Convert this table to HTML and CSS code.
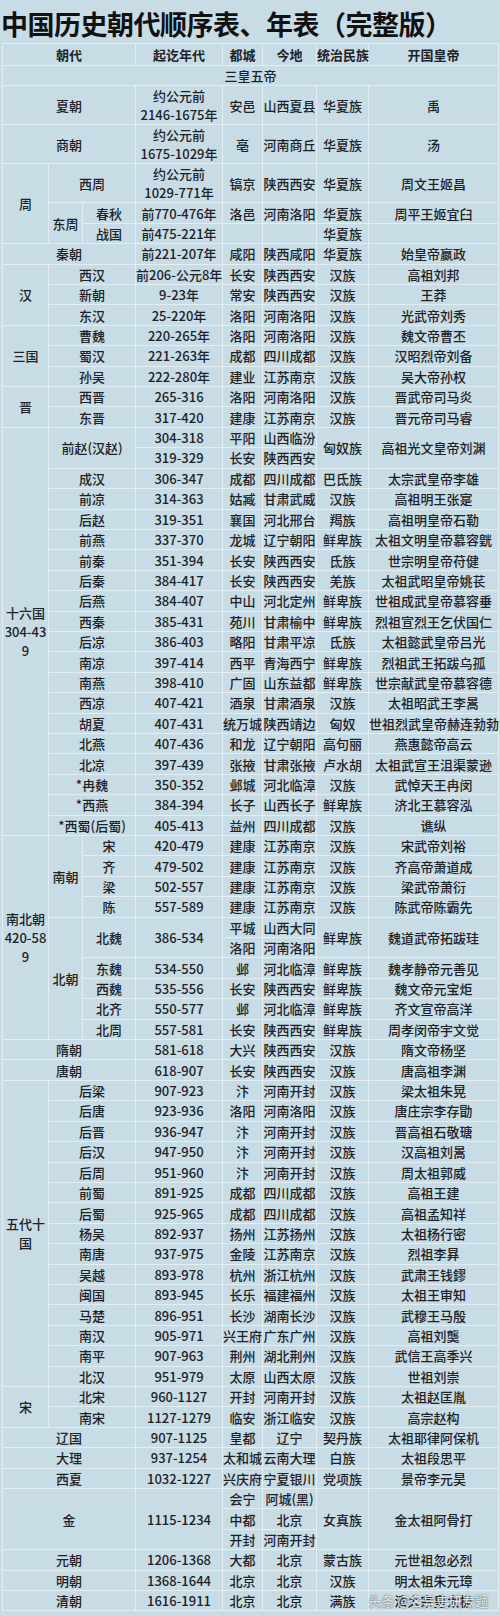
FILE: index.html
```html
<!DOCTYPE html>
<html lang="zh-CN">
<head>
<meta charset="utf-8">
<title>中国历史朝代顺序表、年表（完整版）</title>
<link rel="stylesheet" href="styles.css">
</head>
<body>
<div class="page">
  <h1 class="title">中国历史朝代顺序表、年表（完整版）</h1>
  <table class="dyn">
    <colgroup>
      <col class="c-a"><col class="c-b"><col class="c-c"><col class="c-d"><col class="c-e"><col class="c-f"><col class="c-g"><col class="c-h">
    </colgroup>
    <thead>
      <tr class="head"><th colspan="3">朝代</th><th>起讫年代</th><th>都城</th><th>今地</th><th>统治民族</th><th>开国皇帝</th></tr>
    </thead>
    <tbody>
      <tr><td colspan="8">三皇五帝</td></tr>
      <tr class="dbl"><td colspan="3">夏朝</td><td>约公元前<br>2146-1675年</td><td>安邑</td><td>山西夏县</td><td>华夏族</td><td>禹</td></tr>
      <tr class="dbl"><td colspan="3">商朝</td><td>约公元前<br>1675-1029年</td><td>亳</td><td>河南商丘</td><td>华夏族</td><td>汤</td></tr>
      <tr class="dbl"><td rowspan="3">周</td><td colspan="2">西周</td><td>约公元前<br>1029-771年</td><td>镐京</td><td>陕西西安</td><td>华夏族</td><td>周文王姬昌</td></tr>
      <tr><td rowspan="2">东周</td><td>春秋</td><td>前770-476年</td><td>洛邑</td><td>河南洛阳</td><td>华夏族</td><td>周平王姬宜臼</td></tr>
      <tr><td>战国</td><td>前475-221年</td><td></td><td></td><td>华夏族</td><td></td></tr>
      <tr><td colspan="3">秦朝</td><td>前221-207年</td><td>咸阳</td><td>陕西咸阳</td><td>华夏族</td><td>始皇帝嬴政</td></tr>
      <tr><td rowspan="3">汉</td><td colspan="2">西汉</td><td>前206-公元8年</td><td>长安</td><td>陕西西安</td><td>汉族</td><td>高祖刘邦</td></tr>
      <tr><td colspan="2">新朝</td><td>9-23年</td><td>常安</td><td>陕西西安</td><td>汉族</td><td>王莽</td></tr>
      <tr><td colspan="2">东汉</td><td>25-220年</td><td>洛阳</td><td>河南洛阳</td><td>汉族</td><td>光武帝刘秀</td></tr>
      <tr><td rowspan="3">三国</td><td colspan="2">曹魏</td><td>220-265年</td><td>洛阳</td><td>河南洛阳</td><td>汉族</td><td>魏文帝曹丕</td></tr>
      <tr><td colspan="2">蜀汉</td><td>221-263年</td><td>成都</td><td>四川成都</td><td>汉族</td><td>汉昭烈帝刘备</td></tr>
      <tr><td colspan="2">孙吴</td><td>222-280年</td><td>建业</td><td>江苏南京</td><td>汉族</td><td>吴大帝孙权</td></tr>
      <tr><td rowspan="2">晋</td><td colspan="2">西晋</td><td>265-316</td><td>洛阳</td><td>河南洛阳</td><td>汉族</td><td>晋武帝司马炎</td></tr>
      <tr><td colspan="2">东晋</td><td>317-420</td><td>建康</td><td>江苏南京</td><td>汉族</td><td>晋元帝司马睿</td></tr>
      <tr><td rowspan="20">十六国<br>304-43<br>9</td><td colspan="2" rowspan="2">前赵(汉赵)</td><td>304-318</td><td>平阳</td><td>山西临汾</td><td rowspan="2">匈奴族</td><td rowspan="2">高祖光文皇帝刘渊</td></tr>
      <tr><td>319-329</td><td>长安</td><td>陕西西安</td></tr>
      <tr><td colspan="2">成汉</td><td>306-347</td><td>成都</td><td>四川成都</td><td>巴氐族</td><td>太宗武皇帝李雄</td></tr>
      <tr><td colspan="2">前凉</td><td>314-363</td><td>姑臧</td><td>甘肃武威</td><td>汉族</td><td>高祖明王张寔</td></tr>
      <tr><td colspan="2">后赵</td><td>319-351</td><td>襄国</td><td>河北邢台</td><td>羯族</td><td>高祖明皇帝石勒</td></tr>
      <tr><td colspan="2">前燕</td><td>337-370</td><td>龙城</td><td>辽宁朝阳</td><td>鲜卑族</td><td>太祖文明皇帝慕容皝</td></tr>
      <tr><td colspan="2">前秦</td><td>351-394</td><td>长安</td><td>陕西西安</td><td>氐族</td><td>世宗明皇帝苻健</td></tr>
      <tr><td colspan="2">后秦</td><td>384-417</td><td>长安</td><td>陕西西安</td><td>羌族</td><td>太祖武昭皇帝姚苌</td></tr>
      <tr><td colspan="2">后燕</td><td>384-407</td><td>中山</td><td>河北定州</td><td>鲜卑族</td><td>世祖成武皇帝慕容垂</td></tr>
      <tr><td colspan="2">西秦</td><td>385-431</td><td>苑川</td><td>甘肃榆中</td><td>鲜卑族</td><td>烈祖宣烈王乞伏国仁</td></tr>
      <tr><td colspan="2">后凉</td><td>386-403</td><td>略阳</td><td>甘肃平凉</td><td>氐族</td><td>太祖懿武皇帝吕光</td></tr>
      <tr><td colspan="2">南凉</td><td>397-414</td><td>西平</td><td>青海西宁</td><td>鲜卑族</td><td>烈祖武王拓跋乌孤</td></tr>
      <tr><td colspan="2">南燕</td><td>398-410</td><td>广固</td><td>山东益都</td><td>鲜卑族</td><td>世宗献武皇帝慕容德</td></tr>
      <tr><td colspan="2">西凉</td><td>407-421</td><td>酒泉</td><td>甘肃酒泉</td><td>汉族</td><td>太祖昭武王李暠</td></tr>
      <tr><td colspan="2">胡夏</td><td>407-431</td><td>统万城</td><td>陕西靖边</td><td>匈奴</td><td>世祖烈武皇帝赫连勃勃</td></tr>
      <tr><td colspan="2">北燕</td><td>407-436</td><td>和龙</td><td>辽宁朝阳</td><td>高句丽</td><td>燕惠懿帝高云</td></tr>
      <tr><td colspan="2">北凉</td><td>397-439</td><td>张掖</td><td>甘肃张掖</td><td>卢水胡</td><td>太祖武宣王沮渠蒙逊</td></tr>
      <tr><td colspan="2">*冉魏</td><td>350-352</td><td>邺城</td><td>河北临漳</td><td>汉族</td><td>武悼天王冉闵</td></tr>
      <tr><td colspan="2">*西燕</td><td>384-394</td><td>长子</td><td>山西长子</td><td>鲜卑族</td><td>济北王慕容泓</td></tr>
      <tr><td colspan="2">*西蜀(后蜀)</td><td>405-413</td><td>益州</td><td>四川成都</td><td>汉族</td><td>谯纵</td></tr>
      <tr><td rowspan="10">南北朝<br>420-58<br>9</td><td rowspan="4">南朝</td><td>宋</td><td>420-479</td><td>建康</td><td>江苏南京</td><td>汉族</td><td>宋武帝刘裕</td></tr>
      <tr><td>齐</td><td>479-502</td><td>建康</td><td>江苏南京</td><td>汉族</td><td>齐高帝萧道成</td></tr>
      <tr><td>梁</td><td>502-557</td><td>建康</td><td>江苏南京</td><td>汉族</td><td>梁武帝萧衍</td></tr>
      <tr><td>陈</td><td>557-589</td><td>建康</td><td>江苏南京</td><td>汉族</td><td>陈武帝陈霸先</td></tr>
      <tr><td rowspan="6">北朝</td><td rowspan="2">北魏</td><td rowspan="2">386-534</td><td>平城</td><td>山西大同</td><td rowspan="2">鲜卑族</td><td rowspan="2">魏道武帝拓跋珪</td></tr>
      <tr><td>洛阳</td><td>河南洛阳</td></tr>
      <tr><td>东魏</td><td>534-550</td><td>邺</td><td>河北临漳</td><td>鲜卑族</td><td>魏孝静帝元善见</td></tr>
      <tr><td>西魏</td><td>535-556</td><td>长安</td><td>陕西西安</td><td>鲜卑族</td><td>魏文帝元宝炬</td></tr>
      <tr><td>北齐</td><td>550-577</td><td>邺</td><td>河北临漳</td><td>鲜卑族</td><td>齐文宣帝高洋</td></tr>
      <tr><td>北周</td><td>557-581</td><td>长安</td><td>陕西西安</td><td>鲜卑族</td><td>周孝闵帝宇文觉</td></tr>
      <tr><td colspan="3">隋朝</td><td>581-618</td><td>大兴</td><td>陕西西安</td><td>汉族</td><td>隋文帝杨坚</td></tr>
      <tr><td colspan="3">唐朝</td><td>618-907</td><td>长安</td><td>陕西西安</td><td>汉族</td><td>唐高祖李渊</td></tr>
      <tr><td rowspan="15">五代十<br>国</td><td colspan="2">后梁</td><td>907-923</td><td>汴</td><td>河南开封</td><td>汉族</td><td>梁太祖朱晃</td></tr>
      <tr><td colspan="2">后唐</td><td>923-936</td><td>洛阳</td><td>河南洛阳</td><td>汉族</td><td>唐庄宗李存勖</td></tr>
      <tr><td colspan="2">后晋</td><td>936-947</td><td>汴</td><td>河南开封</td><td>汉族</td><td>晋高祖石敬瑭</td></tr>
      <tr><td colspan="2">后汉</td><td>947-950</td><td>汴</td><td>河南开封</td><td>汉族</td><td>汉高祖刘暠</td></tr>
      <tr><td colspan="2">后周</td><td>951-960</td><td>汴</td><td>河南开封</td><td>汉族</td><td>周太祖郭威</td></tr>
      <tr><td colspan="2">前蜀</td><td>891-925</td><td>成都</td><td>四川成都</td><td>汉族</td><td>高祖王建</td></tr>
      <tr><td colspan="2">后蜀</td><td>925-965</td><td>成都</td><td>四川成都</td><td>汉族</td><td>高祖孟知祥</td></tr>
      <tr><td colspan="2">杨吴</td><td>892-937</td><td>扬州</td><td>江苏扬州</td><td>汉族</td><td>太祖杨行密</td></tr>
      <tr><td colspan="2">南唐</td><td>937-975</td><td>金陵</td><td>江苏南京</td><td>汉族</td><td>烈祖李昪</td></tr>
      <tr><td colspan="2">吴越</td><td>893-978</td><td>杭州</td><td>浙江杭州</td><td>汉族</td><td>武肃王钱鏐</td></tr>
      <tr><td colspan="2">闽国</td><td>893-945</td><td>长乐</td><td>福建福州</td><td>汉族</td><td>太祖王审知</td></tr>
      <tr><td colspan="2">马楚</td><td>896-951</td><td>长沙</td><td>湖南长沙</td><td>汉族</td><td>武穆王马殷</td></tr>
      <tr><td colspan="2">南汉</td><td>905-971</td><td>兴王府</td><td>广东广州</td><td>汉族</td><td>高祖刘龑</td></tr>
      <tr><td colspan="2">南平</td><td>907-963</td><td>荆州</td><td>湖北荆州</td><td>汉族</td><td>武信王高季兴</td></tr>
      <tr><td colspan="2">北汉</td><td>951-979</td><td>太原</td><td>山西太原</td><td>汉族</td><td>世祖刘崇</td></tr>
      <tr><td rowspan="2">宋</td><td colspan="2">北宋</td><td>960-1127</td><td>开封</td><td>河南开封</td><td>汉族</td><td>太祖赵匡胤</td></tr>
      <tr><td colspan="2">南宋</td><td>1127-1279</td><td>临安</td><td>浙江临安</td><td>汉族</td><td>高宗赵构</td></tr>
      <tr><td colspan="3">辽国</td><td>907-1125</td><td>皇都</td><td>辽宁</td><td>契丹族</td><td>太祖耶律阿保机</td></tr>
      <tr><td colspan="3">大理</td><td>937-1254</td><td>太和城</td><td>云南大理</td><td>白族</td><td>太祖段思平</td></tr>
      <tr><td colspan="3">西夏</td><td>1032-1227</td><td>兴庆府</td><td>宁夏银川</td><td>党项族</td><td>景帝李元昊</td></tr>
      <tr><td colspan="3" rowspan="3">金</td><td rowspan="3">1115-1234</td><td>会宁</td><td>阿城(黑)</td><td rowspan="3">女真族</td><td rowspan="3">金太祖阿骨打</td></tr>
      <tr><td>中都</td><td>北京</td></tr>
      <tr><td>开封</td><td>河南开封</td></tr>
      <tr><td colspan="3">元朝</td><td>1206-1368</td><td>大都</td><td>北京</td><td>蒙古族</td><td>元世祖忽必烈</td></tr>
      <tr><td colspan="3">明朝</td><td>1368-1644</td><td>北京</td><td>北京</td><td>汉族</td><td>明太祖朱元璋</td></tr>
      <tr><td colspan="3">清朝</td><td>1616-1911</td><td>北京</td><td>北京</td><td>满族</td><td class="wm-cell">清太宗皇太极<span class="wm">头条 @名异史研专题</span></td></tr>
    </tbody>
  </table>
</div>
</body>
</html>
```

FILE: styles.css
```css
html, body {
  margin: 0;
  padding: 0;
  background: #c8dce5;
}
.page {
  width: 500px;
  height: 1616px;
  overflow: hidden;
  font-family: "Noto Sans CJK SC", "Noto Sans", sans-serif;
  color: #1d2226;
}
.title {
  margin: 0;
  padding: 8px 0 0 1px;
  height: 39px;
  box-sizing: border-box;
  font-size: 27px;
  line-height: 31px;
  font-weight: 700;
  letter-spacing: -0.5px;
  color: #111;
  white-space: nowrap;
}
.dyn {
  margin-left: 2px;
  margin-top: 4px;
  width: 496px;
  table-layout: fixed;
  border-collapse: collapse;
  font-size: 13px;
  line-height: 19px;
  font-weight: 500;
}
.c-a { width: 46px; }
.c-b { width: 34px; }
.c-c { width: 53px; }
.c-d { width: 87px; }
.c-e { width: 40px; }
.c-f { width: 54px; }
.c-g { width: 52px; }
.c-h { width: 130px; }
.dyn th, .dyn td {
  border: 1px solid #e3edf2;
  padding: 0;
  text-align: center;
  vertical-align: middle;
  white-space: nowrap;
  overflow: visible;
}
.dyn th {
  font-weight: 700;
  height: 21px;
}
.dyn tr { height: 20.42px; }
.dyn tr.head { height: 22px; }
.dyn tr.dbl { height: 39px; }
.wm-cell { position: relative; }
.wm {
  position: absolute;
  right: 10px;
  top: 0;
  font-size: 13px;
  color: rgba(255, 255, 255, 0.85);
  text-shadow: 0 0 1px rgba(60, 70, 80, 0.9), 0 0 2px rgba(60, 70, 80, 0.5);
}
```
